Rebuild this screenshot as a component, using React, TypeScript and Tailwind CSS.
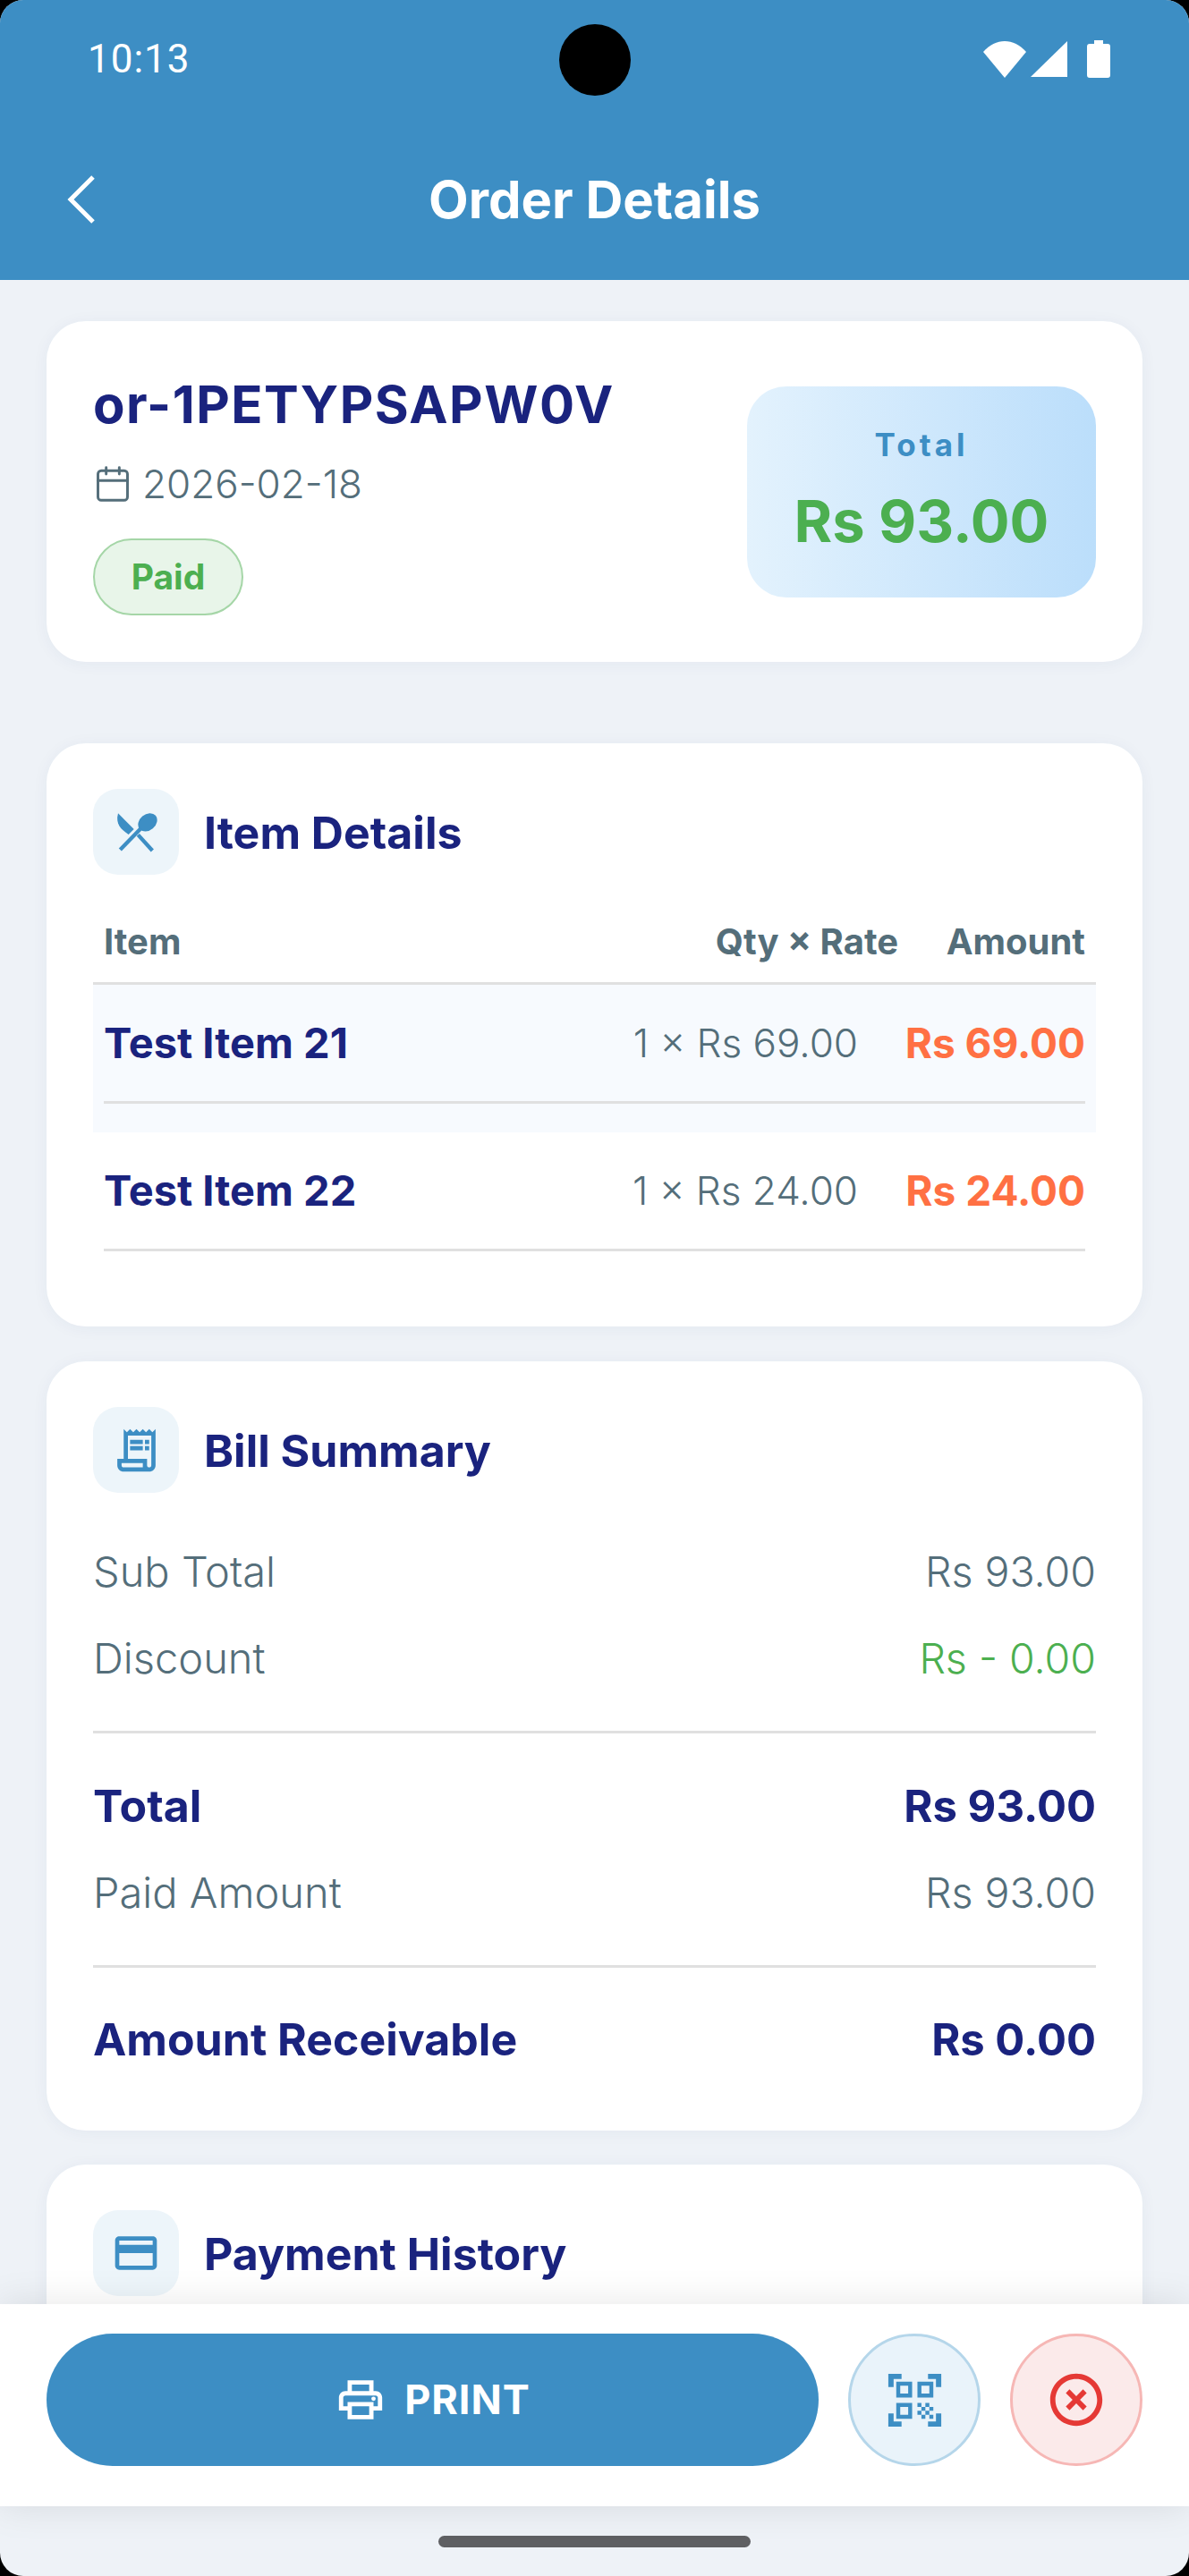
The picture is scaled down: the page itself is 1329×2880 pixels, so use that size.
import type { ReactNode } from "react";
import { Calendar } from "lucide-react";
import {
  MdOutlineReceiptLong,
  MdOutlineCreditCard,
  MdOutlineLocalPrintshop,
  MdQrCodeScanner,
  MdHighlightOff,
} from "react-icons/md";

function SpoonKnifeIcon() {
  return (
    <svg viewBox="140 137 150 150" className="w-[50px] h-[50px]" fill="#3d8ec4">
      <path d="M155 150 L208 203 L190 221 C165 205 145 185 155 150 Z" />
      <path d="M222 222 L270 275" stroke="#3d8ec4" strokeWidth="13" />
      <ellipse cx="254" cy="180" rx="35" ry="27" transform="rotate(-40 254 180)" />
      <path d="M232 200 L162 272" stroke="#3d8ec4" strokeWidth="13" />
    </svg>
  );
}

function BackIcon() {
  return (
    <svg viewBox="0 0 31 54" className="w-[31px] h-[54px]" fill="none" stroke="white" strokeWidth="5">
      <path d="M29 2 L4 27 L29 52" />
    </svg>
  );
}

function StatusIcons() {
  return (
    <div className="flex items-center">
      <svg viewBox="0 0 48 41" className="w-[48px] h-[41px]" fill="white">
        <path d="M0 12 C14 -4 34 -4 48 12 L24 41 Z" />
      </svg>
      <svg viewBox="0 0 41 40" className="w-[41px] h-[40px] ml-[5px]" fill="white">
        <path d="M41 0 V40 H0 Z" />
      </svg>
      <svg viewBox="0 0 26 42" className="w-[26px] h-[42px] ml-[22px]" fill="white">
        <path d="M8 0 H18 V4 H23 Q26 4 26 7 V39 Q26 42 23 42 H3 Q0 42 0 39 V7 Q0 4 3 4 H8 Z" />
      </svg>
    </div>
  );
}

function Card({ title, icon, className, children }: { title: string; icon: ReactNode; className: string; children?: ReactNode }) {
  return (
    <section className={`bg-white rounded-[44px] px-[52px] shadow-[0_2px_18px_rgba(30,60,120,0.05)] ${className}`}>
      <div className="flex items-center gap-[28px]">
        <div className="w-[96px] h-[96px] rounded-[28px] bg-[#edf5fa] flex items-center justify-center text-[#3d8ec4]">
          {icon}
        </div>
        <h2 className="pt-[2px] text-[50px] leading-[60px] font-bold text-[#1a237e]">{title}</h2>
      </div>
      {children}
    </section>
  );
}

function ItemRow({ name, qty, amount, striped }: { name: string; qty: string; amount: string; striped?: boolean }) {
  return (
    <div className={`px-[12px] ${striped ? "bg-[#f7fafe] pb-[32px]" : "pb-0"}`}>
      <div className="flex items-center h-[133px] border-b-[3px] border-[#e0e0e0]">
        <span className="flex-1 text-[47px] font-bold text-[#1a237e]">{name}</span>
        <span className="text-[44px] text-[#546e7a] font-light">{qty}</span>
        <span className="w-[254px] text-right text-[46px] font-bold text-[#ff7043]">{amount}</span>
      </div>
    </div>
  );
}

function SummaryRow({ label, value, strong, valueClass }: { label: string; value: string; strong?: boolean; valueClass?: string }) {
  const base = strong ? "font-bold text-[#1a237e] text-[50px]" : "font-light text-[#546e7a] text-[47px]";
  return (
    <div className={`flex items-center justify-between h-[97px] ${base}`}>
      <span>{label}</span>
      <span className={`${strong ? "text-[49px]" : "text-[46.5px]"} ${valueClass ?? ""}`}>{value}</span>
    </div>
  );
}

export default function App() {
  return (
    <div className="bg-black h-[2880px] w-[1329px] font-[Inter,sans-serif]">
      <div className="h-full flex flex-col overflow-hidden rounded-[26px] bg-[#eef2f7]">
        <header className="h-[313px] shrink-0 bg-[#3d8ec4] text-white">
          <div className="relative h-[132px] pl-[98px] pr-[88px] flex items-center justify-between">
            <span className="font-[Roboto,sans-serif] text-[44px] tracking-[1px]">10:13</span>
            <div className="absolute left-[625px] top-[27px] w-[80px] h-[80px] rounded-full bg-black" />
            <StatusIcons />
          </div>
          <div className="grid grid-cols-[1fr_auto_1fr] items-center h-[182px] px-[75px]">
            <BackIcon />
            <h1 className="text-[58px] font-bold">Order Details</h1>
            <div />
          </div>
        </header>

        <main className="flex-1 min-h-0 overflow-hidden px-[52px] pt-[46px]">
          <section className="bg-white rounded-[44px] h-[381px] pl-[52px] pr-[52px] mb-[91px] flex items-center justify-between shadow-[0_2px_18px_rgba(30,60,120,0.05)]">
            <div className="pt-[8px]">
              <div className="text-[58px] leading-[66px] font-bold tracking-[1.5px] text-[#1a237e]">or-1PETYPSAPW0V</div>
              <div className="mt-[32px] flex items-center gap-[11px] h-[48px] text-[44px] font-light text-[#546e7a]">
                <Calendar size={44} strokeWidth={1.6} />
                <span>2026-02-18</span>
              </div>
              <div className="mt-[37px] w-[168px] h-[86px] rounded-[43px] bg-[#e8f5e9] border-[2px] border-[#a5d6a7] flex items-center justify-center text-[39px] font-bold text-[#4caf50]">
                Paid
              </div>
            </div>
            <div className="w-[390px] h-[236px] rounded-[44px] bg-linear-to-r from-[#e3f2fd] to-[#bbdefb] flex flex-col items-center pt-[40px]">
              <span className="text-[35px] leading-[50px] font-bold tracking-[4px] text-[#3d8ec4]">Total</span>
              <span className="mt-[21px] text-[65px] leading-[80px] font-bold text-[#4caf50]">Rs 93.00</span>
            </div>
          </section>

          <Card title="Item Details" icon={<SpoonKnifeIcon />} className="h-[652px] pt-[51px] mb-[39px]">
            <div className="mt-[38px] h-[85px] pb-[8px] px-[12px] flex items-center border-b-[3px] border-[#e0e0e0] text-[40px] font-bold text-[#546e7a]">
              <span className="flex-1">Item</span>
              <span>Qty × Rate</span>
              <span className="w-[209px] text-right">Amount</span>
            </div>
            <ItemRow name="Test Item 21" qty="1 × Rs 69.00" amount="Rs 69.00" striped />
            <ItemRow name="Test Item 22" qty="1 × Rs 24.00" amount="Rs 24.00" />
          </Card>

          <Card title="Bill Summary" icon={<MdOutlineReceiptLong size={57} />} className="h-[860px] pt-[51px] mb-[38px]">
            <div className="mt-[40px]">
              <SummaryRow label="Sub Total" value="Rs 93.00" />
              <SummaryRow label="Discount" value="Rs - 0.00" valueClass="text-[#4caf50]" />
              <div className="mt-[32px] mb-[33px] border-t-[3px] border-[#e0e0e0]" />
              <SummaryRow label="Total" value="Rs 93.00" strong />
              <SummaryRow label="Paid Amount" value="Rs 93.00" />
              <div className="mt-[32px] mb-[32px] border-t-[3px] border-[#e0e0e0]" />
              <SummaryRow label="Amount Receivable" value="Rs 0.00" strong />
            </div>
          </Card>

          <Card title="Payment History" icon={<MdOutlineCreditCard size={56} />} className="h-[300px] pt-[51px]" />
        </main>

        <footer className="relative z-10 h-[226px] shrink-0 bg-white px-[52px] pt-[33px] flex items-start gap-[33px] shadow-[0_0_40px_rgba(0,0,0,0.1)]">
          <button className="w-[863px] h-[148px] rounded-[74px] bg-[#3d8ec4] text-white flex items-center justify-center gap-[20px]">
            <MdOutlineLocalPrintshop size={58} />
            <span className="text-[45px] font-bold tracking-[1px]">PRINT</span>
          </button>
          <button className="w-[148px] h-[148px] rounded-full bg-[#e9f3fa] border-[3px] border-[#b5d6ea] text-[#3d8ec4] flex items-center justify-center">
            <MdQrCodeScanner size={71} />
          </button>
          <button className="w-[148px] h-[148px] rounded-full bg-[#fbeaea] border-[3px] border-[#f6b7b5] text-[#e53935] flex items-center justify-center">
            <MdHighlightOff size={70} />
          </button>
        </footer>

        <div className="h-[78px] shrink-0 flex justify-center pt-[33px]">
          <div className="w-[349px] h-[13px] rounded-full bg-[#5f6063]" />
        </div>
      </div>
    </div>
  );
}
